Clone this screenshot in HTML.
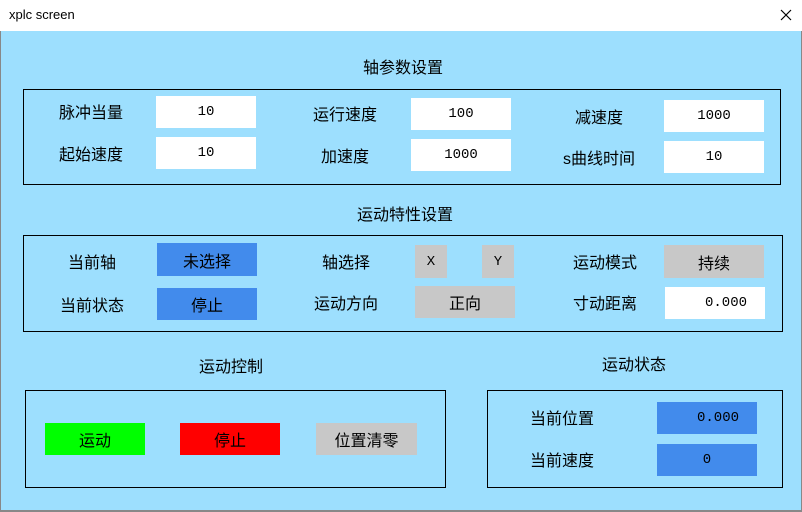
<!DOCTYPE html>
<html><head><meta charset="utf-8"><style>
*{margin:0;padding:0;box-sizing:border-box}
body{width:802px;height:512px;position:relative;overflow:hidden;background:#9ddffe;font-family:"Liberation Sans","Noto Sans CJK SC",sans-serif;font-size:16px;color:#000}
.a{position:absolute;display:flex;align-items:center;justify-content:center;white-space:nowrap}
.t{position:absolute;transform:translate(-50%,-50%);white-space:nowrap}
.box{position:absolute;border:1px solid #000}
.w{background:#fff}.b{background:#428bec}.g{background:#c8c8c8}
.m{font-family:"Liberation Mono",monospace;font-size:14px}
</style></head><body>
<div style="position:absolute;left:0;top:0;width:802px;height:31px;background:#fff"></div>
<div style="position:absolute;left:9px;top:7px;font-size:13px">xplc screen</div>
<svg style="position:absolute;left:780px;top:9px" width="12" height="12"><path d="M1 1L11 11M11 1L1 11" stroke="#000" stroke-width="1.2"/></svg>
<div style="position:absolute;left:0;top:31px;width:1px;height:481px;background:#888"></div>
<div style="position:absolute;left:801px;top:31px;width:1px;height:481px;background:#888"></div>
<div style="position:absolute;left:0;top:510px;width:802px;height:2px;background:#888"></div>

<div class="t" style="left:403px;top:66px">轴参数设置</div>
<div class="box" style="left:23px;top:89px;width:758px;height:96px"></div>
<div class="t" style="left:91px;top:111px">脉冲当量</div>
<div class="a w m" style="left:156px;top:96px;width:100px;height:32px">10</div>
<div class="t" style="left:345px;top:113px">运行速度</div>
<div class="a w m" style="left:411px;top:98px;width:100px;height:32px">100</div>
<div class="t" style="left:599px;top:116px">减速度</div>
<div class="a w m" style="left:664px;top:100px;width:100px;height:32px">1000</div>
<div class="t" style="left:91px;top:153px">起始速度</div>
<div class="a w m" style="left:156px;top:137px;width:100px;height:32px">10</div>
<div class="t" style="left:345px;top:155px">加速度</div>
<div class="a w m" style="left:411px;top:139px;width:100px;height:32px">1000</div>
<div class="t" style="left:599px;top:157px">s曲线时间</div>
<div class="a w m" style="left:664px;top:141px;width:100px;height:32px">10</div>

<div class="t" style="left:405px;top:213px">运动特性设置</div>
<div class="box" style="left:23px;top:235px;width:760px;height:97px"></div>
<div class="t" style="left:92px;top:261px">当前轴</div>
<div class="a b" style="left:157px;top:243px;width:100px;height:33px">未选择</div>
<div class="t" style="left:346px;top:261px">轴选择</div>
<div class="a g m" style="left:415px;top:245px;width:32px;height:33px">X</div>
<div class="a g m" style="left:482px;top:245px;width:32px;height:33px">Y</div>
<div class="t" style="left:605px;top:261px">运动模式</div>
<div class="a g" style="left:664px;top:245px;width:100px;height:33px">持续</div>
<div class="t" style="left:92px;top:304px">当前状态</div>
<div class="a b" style="left:157px;top:288px;width:100px;height:32px">停止</div>
<div class="t" style="left:346px;top:302px">运动方向</div>
<div class="a g" style="left:415px;top:286px;width:100px;height:32px">正向</div>
<div class="t" style="left:605px;top:302px">寸动距离</div>
<div class="a w m" style="left:665px;top:287px;width:100px;height:32px;justify-content:flex-end;padding-right:18px">0.000</div>

<div class="t" style="left:231px;top:365px">运动控制</div>
<div class="box" style="left:25px;top:390px;width:421px;height:98px"></div>
<div class="a" style="left:45px;top:423px;width:100px;height:32px;background:#00ff00">运动</div>
<div class="a" style="left:180px;top:423px;width:100px;height:32px;background:#ff0000">停止</div>
<div class="a g" style="left:316px;top:423px;width:101px;height:32px">位置清零</div>

<div class="t" style="left:634px;top:363px">运动状态</div>
<div class="box" style="left:487px;top:390px;width:296px;height:98px"></div>
<div class="t" style="left:562px;top:417px">当前位置</div>
<div class="a b m" style="left:657px;top:402px;width:100px;height:32px;justify-content:flex-end;padding-right:18px">0.000</div>
<div class="t" style="left:562px;top:459px">当前速度</div>
<div class="a b m" style="left:657px;top:444px;width:100px;height:32px">0</div>
</body></html>
